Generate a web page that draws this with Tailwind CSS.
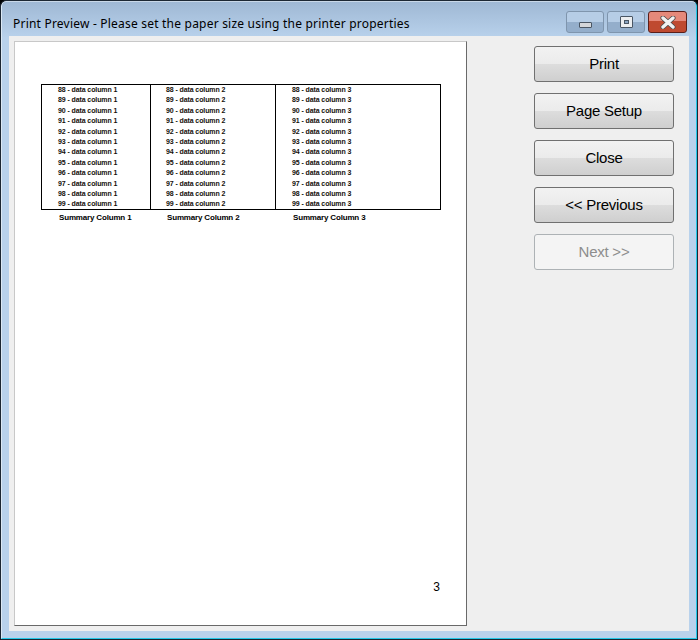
<!DOCTYPE html>
<html lang="en">
<head>
  <meta charset="UTF-8" />
  <title>Print Preview</title>
  <script src="https://cdn.jsdelivr.net/npm/@tailwindcss/browser@4"></script>
</head>
<body class="w-[698px] h-[640px] overflow-hidden bg-black">

  <!-- window frame -->
  <div class="w-[698px] h-[640px] border border-[#1c2733] rounded-t-[6px] overflow-hidden">
    <div class="h-full flex flex-col border-l border-t border-r border-b border-l-[#dce9f5] border-t-[#c9d8e8] border-r-[#23c8e8] border-b-[#23c8e8] rounded-t-[5px] bg-[#b9d2ec] bg-gradient-to-b from-[#9fb8d4] to-[#b9d2ec] to-[36px]">

      <!-- title bar -->
      <div class="h-[34px] shrink-0 flex items-start">
        <div class="flex-1 pl-[11px] pt-[13px] text-[12px] leading-[17px] text-black whitespace-nowrap tracking-[0.21px] font-['Noto_Sans',sans-serif]">Print Preview - Please set the paper size using the printer properties</div>
        <div class="flex gap-[3px] pt-[9px] pr-[9px]">
          <div class="w-[38px] h-[22px] rounded-[3px] border border-[#7f95ad] flex items-end justify-center pb-[4px] bg-gradient-to-b from-[#b6cde6] from-50% to-[#94aecb] to-50%">
            <div class="w-[13px] h-[6px] bg-[#d4d6da] border border-[#4a5664] rounded-[1px]"></div>
          </div>
          <div class="w-[38px] h-[22px] rounded-[3px] border border-[#7f95ad] flex items-center justify-center bg-gradient-to-b from-[#b6cde6] from-50% to-[#94aecb] to-50%">
            <div class="w-[13px] h-[12px] bg-[#eceef0] border border-[#4a5664] rounded-[1px] flex items-center justify-center">
              <div class="w-[5px] h-[4px] bg-[#8ba5c2] border border-[#4a5664]"></div>
            </div>
          </div>
          <div class="w-[39px] h-[22px] rounded-[3px] border border-[#5a1f1a] flex items-center justify-center bg-gradient-to-b from-[#e5897a] from-45% to-[#bf4a30] to-45%">
            <svg width="16" height="13" viewBox="0 0 16 13">
              <path d="M3 2 L13 11 M13 2 L3 11" stroke="#4a4a4a" stroke-width="5" stroke-linecap="round" />
              <path d="M3 2 L13 11 M13 2 L3 11" stroke="#f1f1f1" stroke-width="3.4" stroke-linecap="round" />
            </svg>
          </div>
        </div>
      </div>

      <!-- client area -->
      <div class="mx-[7px] h-[595px] shrink-0 flex bg-[#efefef]">

        <!-- preview pane -->
        <div class="pl-[5px] pt-[5px]">
          <div class="w-[453px] h-[585px] bg-white border border-l-[#c8c8c8] border-t-[#c8c8c8] border-r-[#696969] border-b-[#696969] flex flex-col pl-[26px] pt-[42px] font-['Liberation_Sans',sans-serif]">
            <div class="w-[400px] h-[126px] border border-black grid grid-cols-[109px_125px_1fr] text-[7px] font-bold leading-[10.4px] text-[#14100a] tracking-[-0.1px]">
              <div class="border-r border-black pl-[16px]">
                <div>88 - data column 1</div><div>89 - data column 1</div><div>90 - data column 1</div><div>91 - data column 1</div>
                <div>92 - data column 1</div><div>93 - data column 1</div><div>94 - data column 1</div><div>95 - data column 1</div>
                <div>96 - data column 1</div><div>97 - data column 1</div><div>98 - data column 1</div><div>99 - data column 1</div>
              </div>
              <div class="border-r border-black pl-[15px]">
                <div>88 - data column 2</div><div>89 - data column 2</div><div>90 - data column 2</div><div>91 - data column 2</div>
                <div>92 - data column 2</div><div>93 - data column 2</div><div>94 - data column 2</div><div>95 - data column 2</div>
                <div>96 - data column 2</div><div>97 - data column 2</div><div>98 - data column 2</div><div>99 - data column 2</div>
              </div>
              <div class="pl-[16px]">
                <div>88 - data column 3</div><div>89 - data column 3</div><div>90 - data column 3</div><div>91 - data column 3</div>
                <div>92 - data column 3</div><div>93 - data column 3</div><div>94 - data column 3</div><div>95 - data column 3</div>
                <div>96 - data column 3</div><div>97 - data column 3</div><div>98 - data column 3</div><div>99 - data column 3</div>
              </div>
            </div>
            <div class="w-[400px] grid grid-cols-[109px_125px_1fr] text-[8px] font-bold leading-[10px] text-black pt-[3px] tracking-[-0.17px]">
              <div class="pl-[18px]">Summary Column 1</div>
              <div class="pl-[17px]">Summary Column 2</div>
              <div class="pl-[18px]">Summary Column 3</div>
            </div>
            <div class="w-[399px] mt-auto mb-[31px] text-right text-[12px] leading-[14px] text-black">3</div>
          </div>
        </div>

        <!-- buttons -->
        <div class="flex flex-col gap-[11px] pl-[67px] pt-[10px] font-['Liberation_Sans',sans-serif] text-[15px] tracking-[-0.25px] text-black">
          <button class="w-[140px] h-[36px] rounded-[3px] border border-[#707070] [background-image:linear-gradient(#f2f2f2,#ebebeb_50%,#dddddd_50%,#cfcfcf)]">Print</button>
          <button class="w-[140px] h-[36px] rounded-[3px] border border-[#707070] [background-image:linear-gradient(#f2f2f2,#ebebeb_50%,#dddddd_50%,#cfcfcf)]">Page Setup</button>
          <button class="w-[140px] h-[36px] rounded-[3px] border border-[#707070] [background-image:linear-gradient(#f2f2f2,#ebebeb_50%,#dddddd_50%,#cfcfcf)]">Close</button>
          <button class="w-[140px] h-[36px] rounded-[3px] border border-[#707070] [background-image:linear-gradient(#f2f2f2,#ebebeb_50%,#dddddd_50%,#cfcfcf)]">&lt;&lt; Previous</button>
          <button class="w-[140px] h-[36px] rounded-[3px] border border-[#adb2b5] bg-[#f4f4f4] text-[#8d8d8d]" disabled>Next &gt;&gt;</button>
        </div>
      </div>

    </div>
  </div>

</body>
</html>
